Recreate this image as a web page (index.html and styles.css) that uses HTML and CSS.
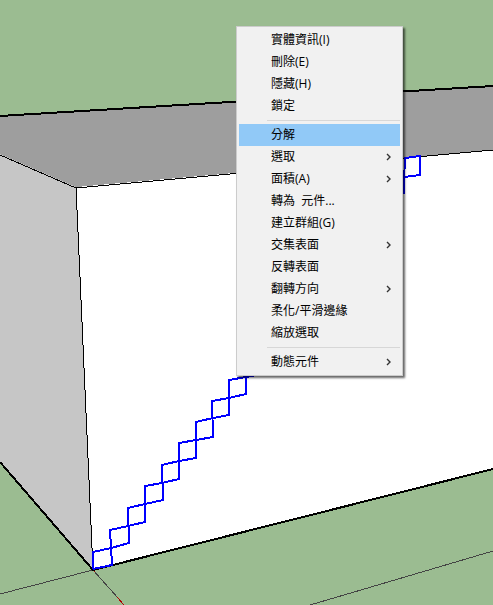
FILE: index.html
```html
<!DOCTYPE html>
<html lang="zh-Hant">
<head>
  <meta charset="UTF-8">
  <meta name="viewport" content="width=device-width, initial-scale=1.0">
  <title>SketchUp</title>
  <link rel="stylesheet" href="styles.css">
</head>
<body>
  <main class="viewport">
    <svg class="scene" viewBox="0 0 493 605" preserveAspectRatio="xMidYMid slice" aria-hidden="true">
      <!-- Box faces -->
      <polygon class="face-top" points="0,115 493,86 493,150 76,187 0,154"/>
      <polygon class="face-side" points="0,154 76,187 93,570 0,462"/>
      <polygon class="face-front" points="76,187 493,150 493,469 93,570"/>

      <!-- Axes -->
      <path class="axis" d="M0 594L93 570L118 598M310 605L493 551"/>
      <path class="axis-red" d="M117 597L124 605M94 570L95 572"/>

      <!-- Edges -->
      <path class="edge" d="M0 155L76 188L493 150M76 187L93 570"/>
      <path class="edge profile" d="M0 116L493 86M0 462L93 570L493 469"/>

      <!-- Selected stairs -->
      <path class="stairs" d="M93 569V552L111 548L129 543L128 508L145 504L163 500L162 465L179 461L196 458V422L213 418L229 415V380L246 377L256 375"/>
      <path class="stairs" d="M93 569L112 565L110 530L128 526L145 522V486L162 483L179 479V443L196 440L213 437L212 401L229 398L246 394V377"/>
      <path class="stairs" d="M404 194V182L405 158L420 156V175L404 177"/>
    </svg>

    <ul class="menu" role="menu">
      <li><button class="menu-item" role="menuitem">實體資訊(I)</button></li>
      <li><button class="menu-item" role="menuitem">刪除(E)</button></li>
      <li><button class="menu-item" role="menuitem">隱藏(H)</button></li>
      <li><button class="menu-item" role="menuitem">鎖定</button></li>
      <li class="separator" role="separator"></li>
      <li><button class="menu-item active" role="menuitem">分解</button></li>
      <li><button class="menu-item" role="menuitem">選取<svg class="arrow" viewBox="0 0 6 8"><path d="M1 1L4 4L1 7"/></svg></button></li>
      <li><button class="menu-item" role="menuitem">面積(A)<svg class="arrow" viewBox="0 0 6 8"><path d="M1 1L4 4L1 7"/></svg></button></li>
      <li><button class="menu-item" role="menuitem">轉為&nbsp; 元件...</button></li>
      <li><button class="menu-item" role="menuitem">建立群組(G)</button></li>
      <li><button class="menu-item" role="menuitem">交集表面<svg class="arrow" viewBox="0 0 6 8"><path d="M1 1L4 4L1 7"/></svg></button></li>
      <li><button class="menu-item" role="menuitem">反轉表面</button></li>
      <li><button class="menu-item" role="menuitem">翻轉方向<svg class="arrow" viewBox="0 0 6 8"><path d="M1 1L4 4L1 7"/></svg></button></li>
      <li><button class="menu-item" role="menuitem">柔化/平滑邊緣</button></li>
      <li><button class="menu-item" role="menuitem">縮放選取</button></li>
      <li class="separator" role="separator"></li>
      <li><button class="menu-item" role="menuitem">動態元件<svg class="arrow" viewBox="0 0 6 8"><path d="M1 1L4 4L1 7"/></svg></button></li>
    </ul>
  </main>
</body>
</html>
```

FILE: styles.css
```css
body {
  margin: 0;
  font-family: "Open Sans", "Noto Sans CJK TC", sans-serif;
  font-size: 12px;
  color: #000;
}

.viewport {
  position: relative;
  height: 100vh;
  overflow: hidden;
  background-color: #9bbc91;
}

.scene {
  display: block;
  width: 100%;
  height: 100%;
  shape-rendering: crispEdges;
}

.face-top {
  fill: #9e9e9e;
}

.face-side {
  fill: #c6c6c6;
}

.face-front {
  fill: #fff;
}

.edge {
  fill: none;
  stroke: #000;
  stroke-width: 1;
}

.profile {
  stroke-width: 2;
}

.axis {
  fill: none;
  stroke: #444;
}

.axis-red {
  stroke: #b00000;
}

.stairs {
  fill: none;
  stroke: #00f;
  stroke-width: 2;
}

/* Context menu */
.menu {
  position: absolute;
  top: 26px;
  left: 236px;
  box-sizing: border-box;
  width: 167px;
  margin: 0;
  padding: 2px;
  list-style: none;
  background-color: #f1f1f1;
  border: 1px solid #ccc;
  box-shadow: 2px 2px 2px rgba(0, 0, 0, 0.6);
}

.menu-item {
  display: flex;
  align-items: center;
  justify-content: space-between;
  width: 100%;
  height: 22px;
  padding: 0 8px 0 32px;
  border: none;
  background: none;
  color: inherit;
  font: inherit;
  line-height: 22px;
  white-space: nowrap;
}

.menu-item:hover,
.menu-item.active {
  background-color: #91c9f7;
}

.separator {
  height: 1px;
  margin: 3px 0 3px 28px;
  background-color: #d7d7d7;
}

.arrow {
  width: 6px;
  height: 8px;
  fill: none;
  stroke: #333;
  stroke-width: 1.4;
}
```
